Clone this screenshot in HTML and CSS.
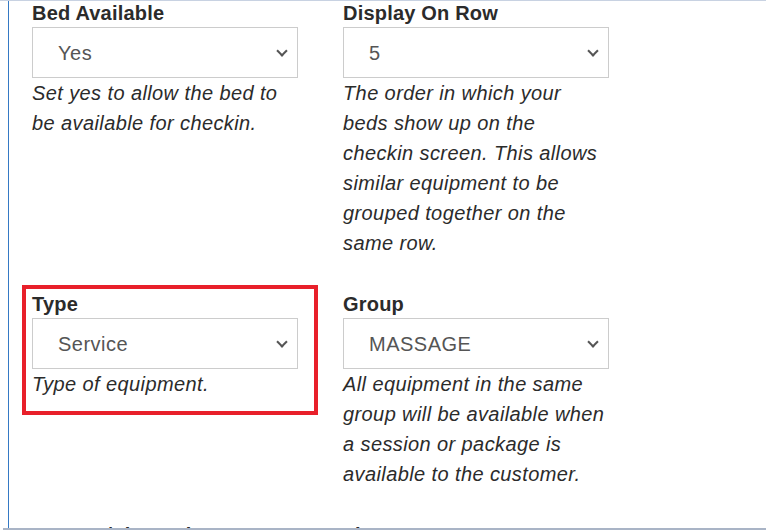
FILE: index.html
```html
<!DOCTYPE html>
<html lang="en">
<head>
    <meta charset="UTF-8">
    <meta name="viewport" content="width=device-width, initial-scale=1.0">
    <title>Edit Equipment</title>
    <link rel="stylesheet" href="styles.css">
</head>
<body>

<div class="frame">
    <div class="panel">
        <div class="fields">

            <div class="field">
                <label for="bed-available">Bed Available</label>
                <div class="select-wrap">
                    <select id="bed-available">
                        <option>Yes</option>
                        <option>No</option>
                    </select>
                </div>
                <p class="help">Set yes to allow the bed to be available for checkin.</p>
            </div>

            <div class="field">
                <label for="display-row">Display On Row</label>
                <div class="select-wrap">
                    <select id="display-row">
                        <option>5</option>
                    </select>
                </div>
                <p class="help">The order in which your beds show up on the checkin screen. This allows similar equipment to be grouped together on the same row.</p>
            </div>

            <div class="field"></div>

            <div class="field highlighted">
                <label for="type">Type</label>
                <div class="select-wrap">
                    <select id="type">
                        <option>Service</option>
                    </select>
                </div>
                <p class="help">Type of equipment.</p>
            </div>

            <div class="field">
                <label for="group">Group</label>
                <div class="select-wrap">
                    <select id="group">
                        <option>MASSAGE</option>
                    </select>
                </div>
                <p class="help">All equipment in the same group will be available when a session or package is available to the customer.</p>
            </div>

            <div class="field"></div>

            <div class="field">
                <label>Room #/Thermal</label>
            </div>

            <div class="field">
                <label>Timer Type</label>
            </div>

            <div class="field">
                <label>CCM Dept</label>
            </div>

        </div>
    </div>
    <div class="bottom-bar"></div>
</div>

</body>
</html>
```

FILE: styles.css
```css
/* Basic Reset */
*, *::before, *::after {
    margin: 0;
    padding: 0;
    box-sizing: border-box;
}

body {
    font-family: "Liberation Sans", Arial, sans-serif;
    background-color: #fff;
    color: #333;
    overflow: hidden;
}

.frame {
    height: 530px;
    border-top: 1px solid #c8d2e2;
    display: flex;
    flex-direction: column;
}

.panel {
    flex: 1;
    margin-left: 8px;
    border-left: 1px solid #3579c4;
    padding-left: 23px;
    overflow: hidden;
}

.bottom-bar {
    height: 2px;
    margin-left: 3px;
    background-color: #a9b4c6;
}

/* Field grid */
.fields {
    display: grid;
    grid-template-columns: 266px 266px 266px;
    column-gap: 45px;
    row-gap: 34px;
}

.field {
    position: relative;
}

.field label {
    display: block;
    font-size: 20px;
    font-weight: bold;
    line-height: 24px;
    letter-spacing: 0.2px;
    margin-bottom: 2px;
    color: #2b2b2b;
}

.select-wrap {
    position: relative;
}

.select-wrap::after {
    content: "";
    position: absolute;
    right: 12px;
    top: 20px;
    width: 8px;
    height: 8px;
    border-right: 2px solid #555;
    border-bottom: 2px solid #555;
    transform: rotate(45deg);
    pointer-events: none;
}

select {
    appearance: none;
    -webkit-appearance: none;
    display: block;
    width: 100%;
    height: 51px;
    padding: 0 30px 0 25px;
    font-family: inherit;
    font-size: 20px;
    letter-spacing: 0.5px;
    color: #555;
    background-color: #fff;
    border: 1px solid #ccc;
    border-radius: 0;
}

.help {
    font-size: 20px;
    font-style: italic;
    line-height: 30px;
    letter-spacing: 0.4px;
    color: #2b2b2b;
}

/* Annotation box */
.highlighted::before {
    content: "";
    position: absolute;
    left: -10px;
    top: -7px;
    width: 296px;
    height: 130px;
    border: 4px solid #e8202a;
    pointer-events: none;
}
```
